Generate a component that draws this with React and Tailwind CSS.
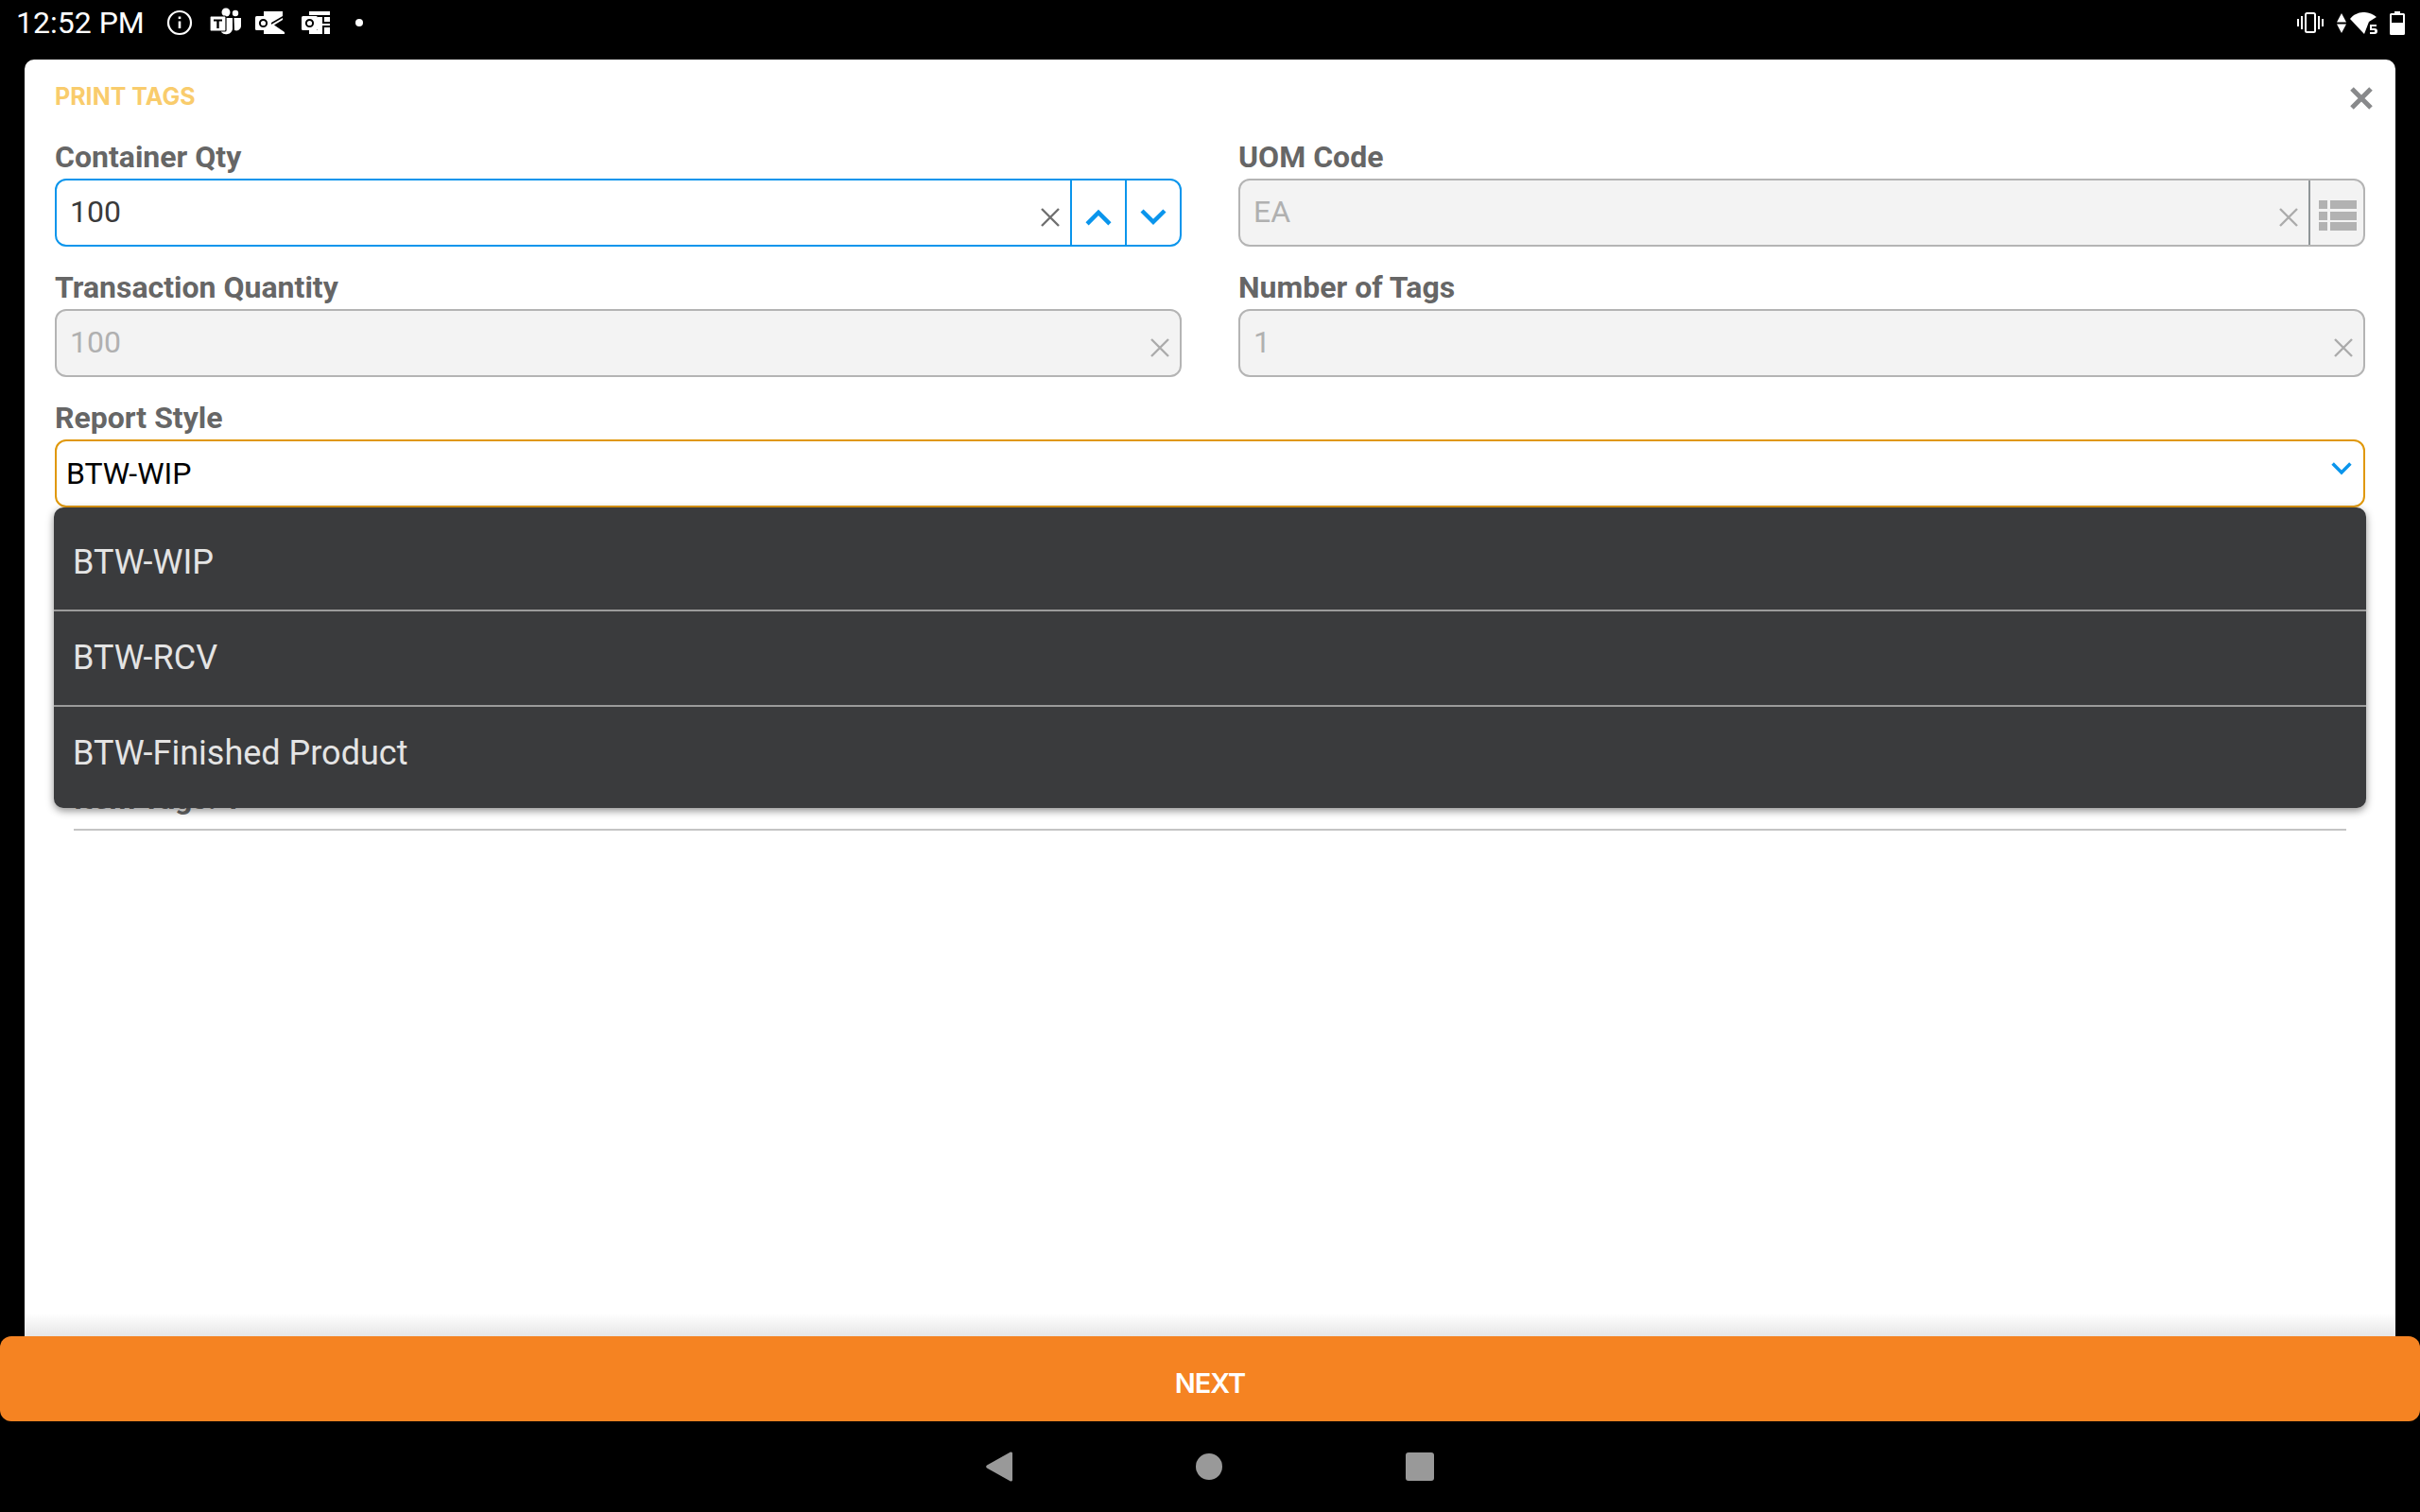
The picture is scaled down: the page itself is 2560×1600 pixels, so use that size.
const XIcon = ({ color = "#6f6f6f" }) => (
  <svg width="22" height="22" viewBox="0 0 22 22" fill="none" stroke={color} strokeWidth="2.4">
    <path d="M2 2 L20 20 M20 2 L2 20" />
  </svg>
);

const Chevron = ({ up = false, size = 28 }) => (
  <svg width={size} height={size * 0.64} viewBox="0 0 28 18" fill="none" stroke="#0a95ec" strokeWidth="4.5">
    <path d={up ? "M2 16 L14 4 L26 16" : "M2 2 L14 14 L26 2"} />
  </svg>
);

const TableIcon = () => (
  <svg width="40" height="33" viewBox="0 0 40 33" fill="#b2b2b2">
    <rect x="0" y="0" width="9" height="9" />
    <rect x="12" y="0" width="28" height="9" />
    <rect x="0" y="12" width="9" height="9" />
    <rect x="12" y="12" width="28" height="9" />
    <rect x="0" y="23" width="9" height="9" />
    <rect x="12" y="23" width="28" height="9" />
  </svg>
);

const InfoIcon = () => (
  <svg width="28" height="28" viewBox="0 0 28 28" fill="none" stroke="white" strokeWidth="2.2">
    <circle cx="14" cy="14" r="12" />
    <path d="M14 12.5 V20" strokeWidth="2.6" />
    <path d="M14 7.5 V10" strokeWidth="2.6" />
  </svg>
);

const TeamsIcon = () => (
  <svg width="34" height="32" viewBox="0 0 34 32" fill="white">
    <circle cx="17" cy="5" r="4.5" />
    <circle cx="27" cy="6" r="3.2" />
    <path d="M12 11 H24 V23 A7 7 0 0 1 12 26 Z" />
    <path d="M25.5 11 H33 V20 A5 5 0 0 1 26 24 Z" />
    <rect x="0" y="9" width="17" height="16" rx="1" stroke="black" strokeWidth="1.2" />
    <path d="M4 12.5 H13 V14.5 H9.7 V22 H7.3 V14.5 H4 Z" fill="black" />
  </svg>
);

const MailIcon = () => (
  <svg width="32" height="26" viewBox="0 0 32 26" fill="white">
    <path d="M9 1 H29 V6 L17 13 L9 8 Z" />
    <path d="M15 16 L29 8 V10 L20 15.5 L31 23 V25 H9 V19 H13 Z" />
    <rect x="0" y="6" width="17" height="15" rx="1.5" />
    <circle cx="8.5" cy="13.5" r="3.6" fill="none" stroke="black" strokeWidth="2" />
  </svg>
);

const CalendarIcon = () => (
  <svg width="30" height="26" viewBox="0 0 30 26" fill="white">
    <path d="M8 1 H30 V5 H8 Z" />
    <path d="M17 7 H22 V14 H30 V16 H22 V25 H8 V21 H17 Z" />
    <path d="M24 7 H30 V12 H24 Z M24 18 H30 V25 H24 Z" />
    <rect x="0" y="6" width="17" height="15" rx="1.5" />
    <circle cx="8.5" cy="13.5" r="3.6" fill="none" stroke="black" strokeWidth="2" />
  </svg>
);

const VibrateIcon = () => (
  <svg width="28" height="22" viewBox="0 0 28 22" fill="white">
    <rect x="0" y="7" width="2" height="8" />
    <rect x="4" y="4" width="2" height="14" />
    <rect x="9" y="1" width="10" height="20" rx="1.5" fill="none" stroke="white" strokeWidth="2" />
    <rect x="22" y="4" width="2" height="14" />
    <rect x="26" y="7" width="2" height="8" />
  </svg>
);

const DataArrows = () => (
  <svg width="10" height="21" viewBox="0 0 10 21" fill="white">
    <path d="M5 0 L10 9.5 H0 Z" />
    <path d="M0 11.5 H10 L5 21 Z" />
  </svg>
);

const WifiIcon = () => (
  <svg width="30" height="23" viewBox="0 0 30 23" fill="white">
    <path d="M0 7 C7 -2 20 -2 28 5 L20 10 L15 23 Z" />
    <path d="M21 13 H28 V15 H23 V17 H26 A3 3 0 0 1 26 23 H21 V21 H26 V19 H21 Z" />
  </svg>
);

const BatteryIcon = () => (
  <svg width="16" height="25" viewBox="0 0 16 25" fill="white">
    <rect x="5" y="0" width="6" height="3" />
    <path d="M1.5 2 H14.5 A1.5 1.5 0 0 1 16 3.5 V23.5 A1.5 1.5 0 0 1 14.5 25 H1.5 A1.5 1.5 0 0 1 0 23.5 V3.5 A1.5 1.5 0 0 1 1.5 2 Z M2 4 V12 H14 V4 Z" fillRule="evenodd" />
  </svg>
);

const StatusBar = () => (
  <div className="h-[39px] mb-[24px] pt-[5px] flex items-start justify-between pl-[17px] pr-[16px] text-white">
    <div className="flex items-center h-[38px]">
      <span className="text-[32px] leading-[38px] w-[159px]">12:52 PM</span>
      <InfoIcon />
      <div className="ml-[18px]"><TeamsIcon /></div>
      <div className="ml-[14px]"><MailIcon /></div>
      <div className="ml-[17px]"><CalendarIcon /></div>
      <div className="ml-[27px] w-[8px] h-[8px] rounded-full bg-white" />
    </div>
    <div className="flex items-center h-[38px]">
      <VibrateIcon />
      <div className="ml-[14px]"><DataArrows /></div>
      <div className="ml-[4px]"><WifiIcon /></div>
      <div className="ml-[12px]"><BatteryIcon /></div>
    </div>
  </div>
);

const Label = ({ children }) => (
  <div className="text-[32px] leading-[36px] font-bold text-[#666666] mb-[5px]">{children}</div>
);

const Field = ({ label, value, disabled = true, focused = false, children }) => (
  <div className="flex-1">
    <Label>{label}</Label>
    <div
      className={`h-[72px] flex items-stretch rounded-[12px] border-2 ${
        focused ? "border-[#0a95ec] bg-white" : "border-[#b4b4b4] bg-[#f3f3f3]"
      }`}
    >
      <div className="flex-1 flex items-center pl-[14px] pr-[10px]">
        <span className={`flex-1 text-[32px] -mt-[3px] ${disabled ? "text-[#b0b0b0]" : "text-[#3a3a3a]"}`}>
          {value}
        </span>
        <div className="mt-[10px]">
          <XIcon color={disabled ? "#ababab" : "#6f6f6f"} />
        </div>
      </div>
      {children}
    </div>
  </div>
);

const Stepper = () => (
  <>
    <div className="w-[58px] flex items-center justify-center border-l-2 border-[#0a95ec] pt-[10px]">
      <Chevron up />
    </div>
    <div className="w-[58px] flex items-center justify-center border-l-2 border-[#0a95ec] pt-[10px]">
      <Chevron />
    </div>
  </>
);

const options = ["BTW-WIP", "BTW-RCV", "BTW-Finished Product"];

const Dropdown = () => (
  <div className="absolute top-full left-[-1px] right-[-1px] z-10 rounded-[10px] bg-[#3a3b3d] shadow-[0_3px_8px_rgba(0,0,0,0.45)] overflow-hidden">
    {options.map((item, i) => (
      <div
        key={item}
        className={`pl-[20px] flex items-center text-[36px] text-[#e4e4e4] ${
          i === 0 ? "h-[108px] pt-[8px]" : i === 1 ? "h-[101px] border-t-2 border-[#9b9b9b] pb-[1px]" : "h-[109px] border-t-2 border-[#9b9b9b] pb-[9px]"
        }`}
      >
        {item}
      </div>
    ))}
  </div>
);

const App = () => {
  return (
    <div className="w-[2560px] h-[1600px] bg-black flex flex-col overflow-hidden font-['Roboto',sans-serif]">
      <StatusBar />

      <div className="flex-1 min-h-0 px-[26px]">
        <div className="relative h-full bg-white rounded-t-[10px] px-[32px] pt-[24px] overflow-hidden">
          <div className="text-[25px] leading-[30px] font-bold text-[#f9cc6c] font-['Inter',sans-serif]">
            PRINT TAGS
          </div>
          <button className="absolute top-[29px] right-[24px]">
            <svg width="24" height="24" viewBox="0 0 24 24" fill="none" stroke="#88898b" strokeWidth="5">
              <path d="M2 2 L22 22 M22 2 L2 22" />
            </svg>
          </button>

          <div className="mt-[31px] flex flex-col gap-[25px]">
            <div className="flex gap-[60px]">
              <Field label="Container Qty" value="100" disabled={false} focused>
                <Stepper />
              </Field>
              <Field label="UOM Code" value="EA">
                <div className="w-[58px] flex items-center justify-center border-l-2 border-[#8f9598] pt-[6px] pl-[2px]">
                  <TableIcon />
                </div>
              </Field>
            </div>
            <div className="flex gap-[60px]">
              <Field label="Transaction Quantity" value="100" />
              <Field label="Number of Tags" value="1" />
            </div>
            <div>
              <Label>Report Style</Label>
              <div className="relative">
                <div className="h-[72px] rounded-[12px] border-2 border-[#e0980a] bg-white flex items-center justify-between pl-[10px] pr-[12px]">
                  <span className="text-[32px] text-black">BTW-WIP</span>
                  <div className="mb-[10px]">
                    <Chevron size={22} />
                  </div>
                </div>
                <Dropdown />
              </div>
            </div>
          </div>

          <div className="mx-[20px] mt-[290px] pb-[14px] border-b-2 border-[#c4c4c4] text-[32px] leading-[36px] font-bold text-[#666666]">
            Item Tags: 1
          </div>

          <div className="absolute left-0 right-0 bottom-0 h-[24px] bg-gradient-to-b from-transparent to-[#e6e6e6]" />
        </div>
      </div>

      <button className="h-[90px] shrink-0 rounded-[12px] bg-[#f58322] text-white text-[29px] font-semibold tracking-[-1px] font-['Inter',sans-serif] flex items-center justify-center pt-[9px]">
        NEXT
      </button>

      <div className="h-[96px] shrink-0 flex items-center justify-center gap-[194px]">
        <svg width="28" height="32" viewBox="0 0 28 32" fill="#999999">
          <path d="M26 0.5 A1.5 1.5 0 0 1 28 2 V30 A1.5 1.5 0 0 1 26 31.5 L1 17.5 A2 2 0 0 1 1 14.5 Z" />
        </svg>
        <div className="w-[28px] h-[28px] rounded-full bg-[#999999]" />
        <div className="w-[30px] h-[30px] rounded-[3px] bg-[#999999]" />
      </div>
    </div>
  );
};

export default App;
